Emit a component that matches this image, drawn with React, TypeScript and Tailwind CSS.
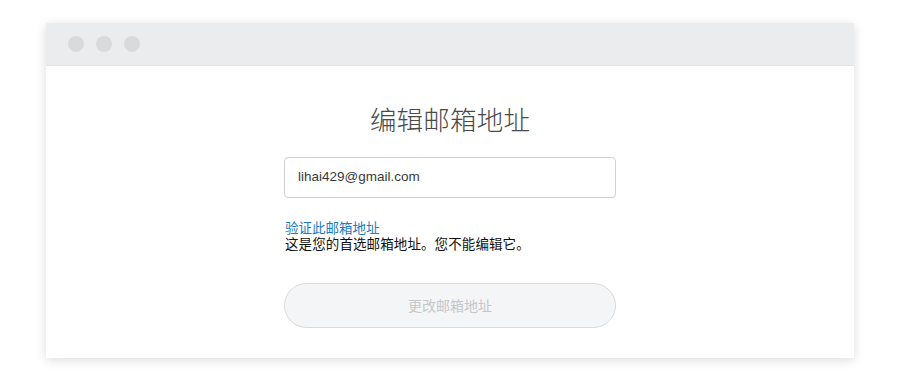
export default function App() {
  return (
    <div className="w-[900px] h-[390px] bg-white pt-[23px] pl-[46px]" style={{ fontFamily: '"Liberation Sans", "Noto Sans CJK SC", sans-serif' }}>
      <div className="w-[808px] h-[335px] bg-white flex flex-col shadow-[0_2px_10px_rgba(0,0,0,0.14)]">
        <div className="h-[43px] bg-[#ebecee] border-b border-[#e3e4e6] flex items-center pl-[22px] gap-[12px] shrink-0">
          <div className="w-[16px] h-[16px] rounded-full bg-[#d9dadc]" />
          <div className="w-[16px] h-[16px] rounded-full bg-[#d9dadc]" />
          <div className="w-[16px] h-[16px] rounded-full bg-[#d9dadc]" />
        </div>
        <div className="flex flex-col items-center pt-[35px]">
          <div className="text-[26.5px] leading-[36px] text-[#4a4a4a] font-light tracking-[0.2px]" style={{ fontFamily: '"Noto Sans CJK SC", sans-serif' }}>编辑邮箱地址</div>
          <div className="mt-[20px] w-[332px] h-[41px] border border-[#cfd0d2] rounded-[4px] flex items-center pl-[13px] text-[13.5px] text-[#3a3a3a]">lihai429@gmail.com</div>
          <div className="w-[332px] mt-[21px] pl-[1px] text-[13.5px] leading-[17px] flex flex-col" style={{ fontFamily: '"Noto Sans CJK SC", sans-serif' }}>
            <div className="text-[#1b7dc1]">验证此邮箱地址</div>
            <div className="text-[#111] -mt-[1px] tracking-[0.1px]">这是您的首选邮箱地址。您不能编辑它。</div>
          </div>
          <div className="mt-[31px] w-[332px] h-[45px] rounded-full bg-[#f4f5f7] border border-[#d9dadc] flex items-center justify-center text-[14px] text-[#c6c7c9]" style={{ fontFamily: '"Noto Sans CJK SC", sans-serif' }}>更改邮箱地址</div>
        </div>
      </div>
    </div>
  );
}
